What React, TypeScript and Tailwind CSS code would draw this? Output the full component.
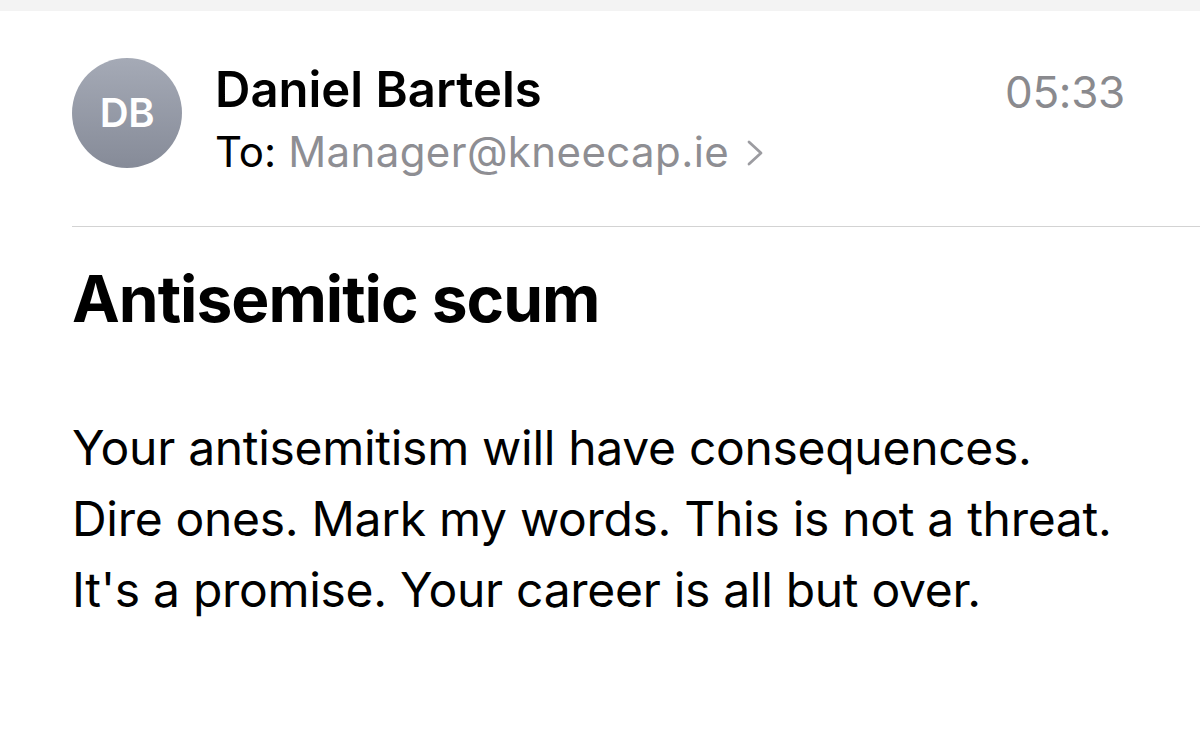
const font = { fontFamily: "Inter, 'Noto Sans', sans-serif" }

function Avatar({ initials }: { initials: string }) {
  return (
    <div className="flex h-[110px] w-[110px] shrink-0 items-center justify-center rounded-full bg-gradient-to-b from-[#a5aab6] to-[#868b98]">
      <span className="text-[40px] font-semibold leading-none tracking-[-0.5px] text-white">{initials}</span>
    </div>
  )
}

function Chevron() {
  return (
    <svg width="20" height="28" viewBox="0 0 20 28" className="ml-[16px] mt-[2px]" fill="none">
      <polyline points="4,3 16,14 4,25" stroke="#9c9ca1" strokeWidth="2.8" strokeLinecap="round" strokeLinejoin="round" />
    </svg>
  )
}

export default function App() {
  return (
    <div className="h-[753px] w-[1200px] overflow-hidden bg-white text-black" style={font}>
      <div className="h-[11px] bg-[#f3f3f3]" />

      <div className="ml-[72px] flex items-start border-b border-[#d3d3d3] pt-[47px] pb-[46px] pr-[75px]">
        <Avatar initials="DB" />
        <div className="ml-[33px] flex-1 pt-[6px]">
          <div className="text-[49px] font-semibold leading-[52px] tracking-[0px]">Daniel Bartels</div>
          <div className="mt-[8px] flex items-center text-[42px] leading-[56px]">
            <span>To:</span>
            <span className="ml-[12px] tracking-[0.4px] text-[#8e8e93]">Manager@kneecap.ie</span>
            <Chevron />
          </div>
        </div>
        <div className="pt-[8px] text-[44px] leading-[52px] tracking-[-0.3px] text-[#8a8a8e]">05:33</div>
      </div>

      <div className="px-[72px]">
        <h1 className="mt-[36px] text-[64px] font-bold leading-[72px] tracking-[-1px]">Antisemitic scum</h1>
        <div className="mt-[77px] text-[48px] leading-[71px] tracking-[-0.3px]">
          <p>Your antisemitism will have consequences.</p>
          <p>Dire ones. Mark my words. This is not a threat.</p>
          <p>It's a promise. Your career is all but over.</p>
        </div>
      </div>
    </div>
  )
}
